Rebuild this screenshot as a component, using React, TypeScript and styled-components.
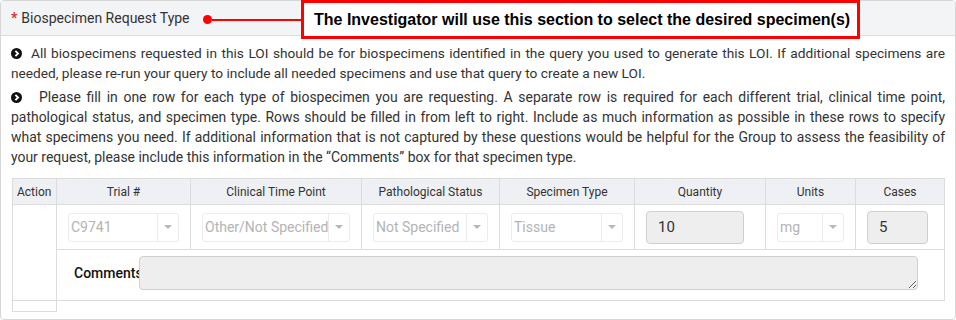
import React from 'react';
import styled, { createGlobalStyle } from 'styled-components';

const GlobalStyle = createGlobalStyle`
  html, body {
    margin: 0;
    padding: 0;
    background: #fff;
  }
  body {
    font-family: Roboto, "Liberation Sans", Arial, sans-serif;
    color: #333;
  }
`;

const Page = styled.div`
  position: relative;
  width: 956px;
  height: 320px;
`;

const Panel = styled.div`
  box-sizing: border-box;
  width: 956px;
  height: 320px;
  border: 1px solid #d6d6d6;
  border-radius: 4px;
  overflow: hidden;
`;

const PanelHeading = styled.div`
  height: 34px;
  display: flex;
  align-items: center;
  padding: 0 10px;
  background: #f3f4f6;
  border-bottom: 1px solid #dcdcdc;
  font-size: 14px;
  color: #333;
`;

const Required = styled.span`
  color: #d9302c;
  font-weight: bold;
  margin-right: 4px;
`;

const PanelBody = styled.div`
  padding: 7px 10px 0 10px;
`;

const Note = styled.p<{ $size: number }>`
  margin: 0 0 4px;
  font-size: ${(p) => p.$size}px;
  line-height: 20px;
  text-align: justify;
  color: #333;
`;

const Callout = styled.div`
  position: absolute;
  top: 0;
  left: 203px;
  display: flex;
  align-items: center;
`;

const Dot = styled.span`
  width: 9px;
  height: 9px;
  border-radius: 50%;
  background: #f00;
`;

const Leader = styled.span`
  width: 89px;
  height: 2px;
  background: #f00;
`;

const CalloutBox = styled.div`
  box-sizing: border-box;
  width: 559px;
  height: 39px;
  border: 3px solid #f00;
  background: #fff;
  display: flex;
  align-items: center;
  padding-left: 10px;
  font-family: "Liberation Sans", Arial, sans-serif;
  font-weight: bold;
  font-size: 16px;
  color: #000;
`;

const Table = styled.table`
  margin-top: 11px;
  margin-left: 1px;
  width: 933px;
  table-layout: fixed;
  border-collapse: collapse;
  font-size: 12px;
`;

const Th = styled.th<{ $left?: boolean }>`
  height: 25px;
  padding: 0 4px;
  background: #eef0f3;
  border: 1px solid #dcdcdc;
  font-weight: normal;
  color: #333;
  text-align: ${(p) => (p.$left ? 'left' : 'center')};
`;

const Td = styled.td<{ $h: number }>`
  height: ${(p) => p.$h}px;
  padding: 0 11px;
  border: 1px solid #dcdcdc;
  vertical-align: middle;
`;

const SelectBox = styled.div`
  box-sizing: border-box;
  height: 29px;
  display: flex;
  border: 1px solid #ececec;
  border-radius: 3px;
  background: #fff;
  font-size: 14px;
  color: #b4b4b4;
`;

const SelectValue = styled.span`
  flex: 1;
  display: flex;
  align-items: center;
  padding-left: 2px;
  white-space: nowrap;
  overflow: hidden;
`;

const SelectArrow = styled.span`
  width: 20px;
  flex: none;
  display: flex;
  align-items: center;
  justify-content: center;
  border-left: 1px solid #ececec;
  &::after {
    content: '';
    border-left: 4px solid transparent;
    border-right: 4px solid transparent;
    border-top: 4px solid #b8b8b8;
  }
`;

const NumberBox = styled.div<{ $w: number }>`
  box-sizing: border-box;
  width: ${(p) => p.$w}px;
  height: 33px;
  display: flex;
  align-items: center;
  padding-left: 11px;
  background: #eee;
  border: 1px solid #cfcfcf;
  border-radius: 4px;
  font-size: 15px;
  color: #333;
`;

const CommentCell = styled.td`
  height: 50px;
  padding: 0 26px 0 17px;
  border: 1px solid #dcdcdc;
  vertical-align: top;
`;

const CommentRow = styled.div`
  display: flex;
  align-items: center;
  padding-top: 6px;
`;

const CommentLabel = styled.label`
  width: 65px;
  flex: none;
  white-space: nowrap;
  font-size: 14px;
  font-weight: 500;
  color: #111;
`;

const CommentInput = styled.textarea`
  position: relative;
  flex: 1;
  box-sizing: border-box;
  height: 34px;
  margin: 0;
  background: #eee;
  border: 1px solid #cfcfcf;
  border-radius: 4px;
`;

const SpacerCell = styled.td`
  height: 10px;
  padding: 0;
  border: 1px solid #dcdcdc;
`;

const ChevronCircle = () => (
  <svg width="11" height="11" viewBox="0 0 10 10" style={{ verticalAlign: '-1px' }}>
    <circle cx="5" cy="5" r="5" fill="#111" />
    <path d="M4 2.6 L6.4 5 L4 7.4" stroke="#fff" strokeWidth="1.7" fill="none" />
  </svg>
);

const Select = ({ value }: { value: string }) => (
  <SelectBox>
    <SelectValue>{value}</SelectValue>
    <SelectArrow />
  </SelectBox>
);

const cols = [44, 134, 171, 138, 135, 131, 90, 89];

export default function App() {
  return (
    <Page>
      <GlobalStyle />
      <Panel>
        <PanelHeading>
          <Required>*</Required>Biospecimen Request Type
        </PanelHeading>
        <PanelBody>
          <Note $size={13.7}>
            <ChevronCircle />
            {'\u00a0 '}All biospecimens requested in this LOI should be for biospecimens identified in the
            query you used to generate this LOI. If additional specimens are needed, please re-run your
            query to include all needed specimens and use that query to create a new LOI.
          </Note>
          <Note $size={13.95}>
            <ChevronCircle />
            {'\u00a0\u00a0 '}Please fill in one row for each type of biospecimen you are requesting. A
            separate row is required for each different trial, clinical time point, pathological status,
            and specimen type. Rows should be filled in from left to right. Include as much information as
            possible in these rows to specify what specimens you need. If additional information that is
            not captured by these questions would be helpful for the Group to assess the feasibility of
            your request, please include this information in the “Comments” box for that specimen type.
          </Note>
          <Table>
            <colgroup>
              {cols.map((w, i) => (
                <col key={i} style={{ width: w }} />
              ))}
            </colgroup>
            <thead>
              <tr>
                <Th $left>Action</Th>
                <Th>Trial #</Th>
                <Th>Clinical Time Point</Th>
                <Th>Pathological Status</Th>
                <Th>Specimen Type</Th>
                <Th>Quantity</Th>
                <Th>Units</Th>
                <Th>Cases</Th>
              </tr>
            </thead>
            <tbody>
              <tr>
                <Td $h={44} rowSpan={2} />
                <Td $h={44}>
                  <Select value="C9741" />
                </Td>
                <Td $h={44}>
                  <Select value="Other/Not Specified" />
                </Td>
                <Td $h={44}>
                  <Select value="Not Specified" />
                </Td>
                <Td $h={44}>
                  <Select value="Tissue" />
                </Td>
                <Td $h={44}>
                  <NumberBox $w={98}>10</NumberBox>
                </Td>
                <Td $h={44}>
                  <Select value="mg" />
                </Td>
                <Td $h={44}>
                  <NumberBox $w={61}>5</NumberBox>
                </Td>
              </tr>
              <tr>
                <CommentCell colSpan={7}>
                  <CommentRow>
                    <CommentLabel>Comments</CommentLabel>
                    <CommentInput />
                  </CommentRow>
                </CommentCell>
              </tr>
              <tr>
                <SpacerCell />
              </tr>
            </tbody>
          </Table>
        </PanelBody>
      </Panel>
      <Callout>
        <Dot />
        <Leader />
        <CalloutBox>The Investigator will use this section to select the desired specimen(s)</CalloutBox>
      </Callout>
    </Page>
  );
}
